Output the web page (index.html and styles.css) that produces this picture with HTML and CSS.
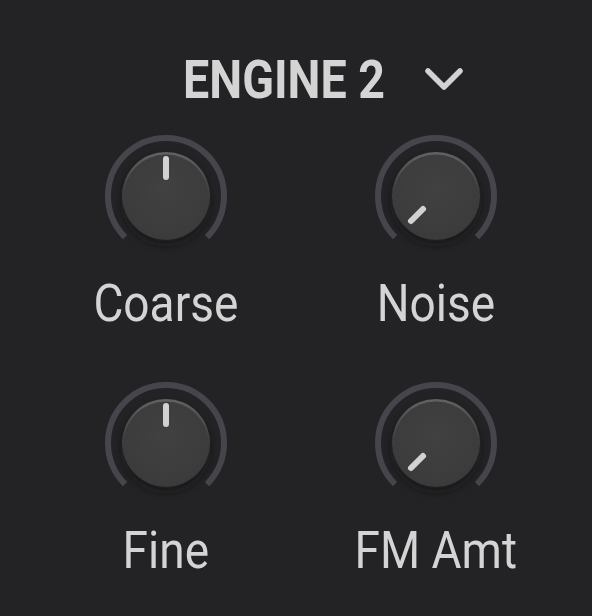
FILE: index.html
```html
<!DOCTYPE html>
<html lang="en">
<head>
    <meta charset="UTF-8">
    <meta name="viewport" content="width=device-width, initial-scale=1.0">
    <title>Engine 2</title>
    <link rel="stylesheet" href="styles.css">
</head>
<body>
    <div class="panel">
        <div class="header">
            <span class="title">ENGINE 2</span>
            <svg class="chevron" width="40" height="26" viewBox="0 0 40 26">
                <polyline points="4,4 20,20 36,4" fill="none" stroke="#d2d2d2" stroke-width="5.5" stroke-linecap="round" stroke-linejoin="round"/>
            </svg>
        </div>

        <div class="knob-grid">
            <div class="knob-cell">
                <svg class="knob" width="130" height="118" viewBox="0 0 130 118">
                    <use href="#knob-base"/>
                    <line x1="65" y1="24" x2="65" y2="42" class="pointer"/>
                </svg>
                <div class="label">Coarse</div>
            </div>
            <div class="knob-cell">
                <svg class="knob" width="130" height="118" viewBox="0 0 130 118">
                    <use href="#knob-base"/>
                    <line x1="40" y1="86" x2="52" y2="74" class="pointer"/>
                </svg>
                <div class="label">Noise</div>
            </div>
            <div class="knob-cell">
                <svg class="knob" width="130" height="118" viewBox="0 0 130 118">
                    <use href="#knob-base"/>
                    <line x1="65" y1="24" x2="65" y2="42" class="pointer"/>
                </svg>
                <div class="label">Fine</div>
            </div>
            <div class="knob-cell">
                <svg class="knob" width="130" height="118" viewBox="0 0 130 118">
                    <use href="#knob-base"/>
                    <line x1="40" y1="86" x2="52" y2="74" class="pointer"/>
                </svg>
                <div class="label">FM Amt</div>
            </div>
        </div>
    </div>

    <!-- shared knob drawing -->
    <svg class="defs" width="0" height="0">
        <defs>
            <linearGradient id="rim" x1="0" y1="0" x2="0" y2="1">
                <stop offset="0" stop-color="#626262"/>
                <stop offset="0.45" stop-color="#3f3f40"/>
                <stop offset="1" stop-color="#333334"/>
            </linearGradient>
            <radialGradient id="face" cx="0.5" cy="0.4" r="0.6">
                <stop offset="0" stop-color="#414142"/>
                <stop offset="1" stop-color="#3b3b3c"/>
            </radialGradient>
            <filter id="shade" x="-30%" y="-30%" width="160%" height="170%">
                <feGaussianBlur stdDeviation="4"/>
            </filter>
            <g id="knob-base">
                <path d="M 23.99 102.01 A 58 58 0 1 1 106.01 102.01" fill="none" stroke="#45454b" stroke-width="6"/>
                <circle cx="65" cy="66" r="43" fill="#161618" opacity="0.75" filter="url(#shade)"/>
                <circle cx="65" cy="61" r="44" fill="url(#rim)"/>
                <circle cx="65" cy="62" r="42.5" fill="url(#face)"/>
            </g>
        </defs>
    </svg>
</body>
</html>
```

FILE: styles.css
```css
body {
    margin: 0;
    background-color: #232326;
    font-family: Roboto, "Liberation Sans", sans-serif;
    color: #d4d4d4;
}
.panel {
    width: 592px;
    height: 616px;
    padding-top: 50px;
    box-sizing: border-box;
}
.header {
    display: flex;
    align-items: center;
    height: 60px;
    padding-left: 183px;
}
.title {
    display: inline-block;
    font-size: 53px;
    font-weight: bold;
    line-height: 60px;
    transform: scaleX(0.88);
    transform-origin: left center;
    white-space: nowrap;
}
.chevron {
    position: absolute;
    left: 424px;
    top: 67px;
}
.knob-grid {
    display: grid;
    grid-template-columns: 270px 270px;
    row-gap: 48px;
    margin-top: 25px;
    padding-left: 31px;
}
.knob-cell {
    display: flex;
    flex-direction: column;
    align-items: center;
}
.knob {
    display: block;
}
.pointer {
    stroke: #d2d2d2;
    stroke-width: 6;
    stroke-linecap: round;
}
.label {
    margin-top: 21px;
    font-size: 52px;
    line-height: 60px;
    transform: scaleX(0.885);
    white-space: nowrap;
}
.defs {
    position: absolute;
}
```
